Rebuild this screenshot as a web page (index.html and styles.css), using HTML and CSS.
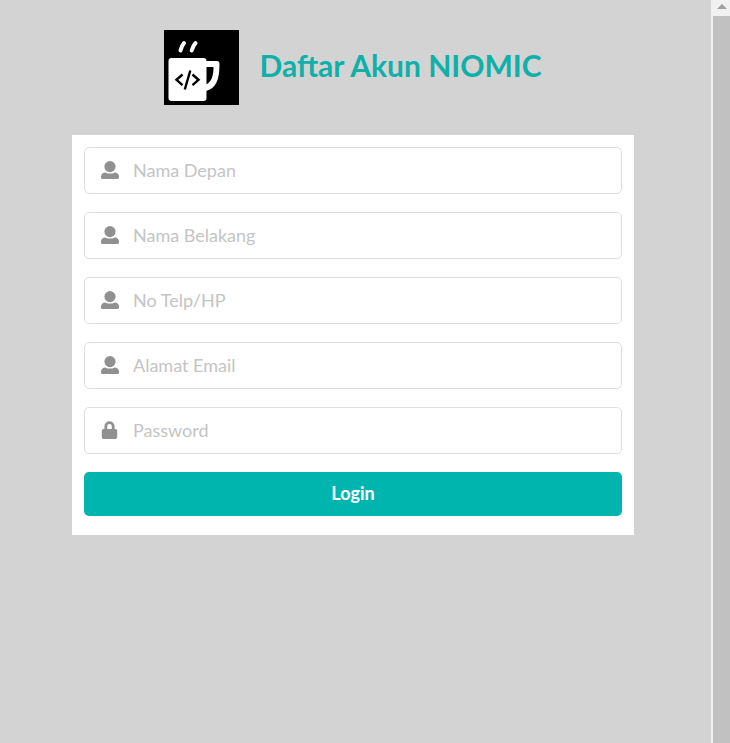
FILE: index.html
```html
<!DOCTYPE html>
<html lang="id">
<head>
<meta charset="utf-8">
<meta name="viewport" content="width=device-width, initial-scale=1">
<title>Daftar Akun NIOMIC</title>
<link rel="stylesheet" href="styles.css">
</head>
<body>
<svg class="sprite" aria-hidden="true">
  <symbol id="user" viewBox="0 0 18 18">
    <circle cx="9" cy="5.6" r="5.6"/>
    <path d="M4.6 11.4C6.6 13 11.4 13 13.4 11.4C16.4 11.4 18 13.2 18 15.6V16.4Q18 18 16.4 18H1.6Q0 18 0 16.4V15.6C0 13.2 1.6 11.4 4.6 11.4Z"/>
  </symbol>
  <symbol id="lock" viewBox="0 0 18 18">
    <path fill-rule="evenodd" d="M3.4 8V5.3a5.1 5.1 0 0 1 10.2 0V8h.9q1.7 0 1.7 1.7v6.6q0 1.7-1.7 1.7h-12q-1.7 0-1.7-1.7V9.7q0-1.7 1.7-1.7zM6.2 8h4.6V5.3a2.3 2.3 0 0 0-4.6 0z"/>
  </symbol>
</svg>
<main class="page">
  <header class="brand">
    <svg class="logo" viewBox="0 0 75 75" role="img" aria-label="NIOMIC">
      <rect width="75" height="75" fill="#000"/>
      <g fill="none" stroke="#fff" stroke-linecap="round">
        <path stroke-width="4" d="M20 13.2Q17.5 16 16.5 20.5M31.5 13.2Q29 16 27.7 20.5"/>
      </g>
      <path fill="#fff" fill-rule="evenodd" d="M42 31H53Q55.500 31 55.500 34C55.500 50 52 58.500 42 61ZM42 37V54.500C47.500 52 49.500 46 49.500 37Z"/>
      <rect x="4.500" y="28" width="38" height="43" rx="3" fill="#fff"/>
      <g fill="none" stroke="#000" stroke-width="2.400">
        <path d="M18.500 44.500l-6 5.300 6 5.300M28.500 44.500l6 5.300-6 5.300M26.300 40.500l-5.500 19"/>
      </g>
    </svg>
    <h1 class="title">Daftar Akun NIOMIC</h1>
  </header>
  <form class="card">
    <label class="field"><svg class="icon" aria-hidden="true"><use href="#user"/></svg><input class="input" type="text" placeholder="Nama Depan" aria-label="Nama Depan"></label>
    <label class="field"><svg class="icon" aria-hidden="true"><use href="#user"/></svg><input class="input" type="text" placeholder="Nama Belakang" aria-label="Nama Belakang"></label>
    <label class="field"><svg class="icon" aria-hidden="true"><use href="#user"/></svg><input class="input" type="tel" placeholder="No Telp/HP" aria-label="No Telp/HP"></label>
    <label class="field"><svg class="icon" aria-hidden="true"><use href="#user"/></svg><input class="input" type="email" placeholder="Alamat Email" aria-label="Alamat Email"></label>
    <label class="field"><svg class="icon" aria-hidden="true"><use href="#lock"/></svg><input class="input" type="password" placeholder="Password" aria-label="Password"></label>
    <button class="submit" type="button">Login</button>
  </form>
</main>
<div class="scrollbar" aria-hidden="true">
  <svg class="arrow" viewBox="0 0 10 5"><path d="M0 5L5 0L10 5Z"/></svg>
  <div class="thumb"></div>
</div>
</body>
</html>
```
FILE: styles.css
```css
* {
  box-sizing: border-box;
}

body {
  margin: 0;
  min-height: 100vh;
  display: flex;
  background: #d3d3d3;
  font-family: Lato, "Liberation Sans", sans-serif;
}

.sprite {
  position: absolute;
  width: 0;
  height: 0;
}

.page {
  flex: 1;
  min-width: 0;
  padding: 30px 77px 30px 72px;
}

.brand {
  display: flex;
  justify-content: center;
  align-items: center;
  gap: 20px;
  margin-bottom: 30px;
}

.logo {
  width: 75px;
  height: 75px;
  flex: none;
}

.title {
  margin: 0;
  padding-bottom: 6px;
  font-size: 30px;
  line-height: 40px;
  font-weight: 700;
  color: #0fb0a9;
}

.card {
  display: flex;
  flex-direction: column;
  gap: 18px;
  padding: 12px 12px 19px;
  background: #fff;
}

.field {
  display: flex;
  align-items: center;
  gap: 14px;
  height: 47px;
  padding: 0 16px 1px;
  border: 1px solid #dededf;
  border-radius: 5px;
}

.icon {
  width: 18px;
  height: 18px;
  flex: none;
  fill: #909090;
}

.input {
  flex: 1;
  min-width: 0;
  padding: 0;
  border: 0;
  outline: 0;
  background: none;
  font: inherit;
  font-size: 18px;
  line-height: 24px;
  color: #333;
}

.input::placeholder {
  color: #c4c4c4;
  opacity: 1;
}

.submit {
  height: 44px;
  padding: 0 0 2px;
  border: 0;
  border-radius: 5px;
  background: #00b5ad;
  color: #fff;
  font: inherit;
  font-size: 18px;
  font-weight: 700;
}

.scrollbar {
  width: 19px;
  display: flex;
  flex-direction: column;
  padding-left: 2px;
  background: #f1f1f1;
}

.arrow {
  width: 10px;
  height: 5px;
  margin: 4px 4px 7px;
  fill: #a0a0a0;
}

.thumb {
  flex: 1;
  background: #c1c1c1;
}
```
